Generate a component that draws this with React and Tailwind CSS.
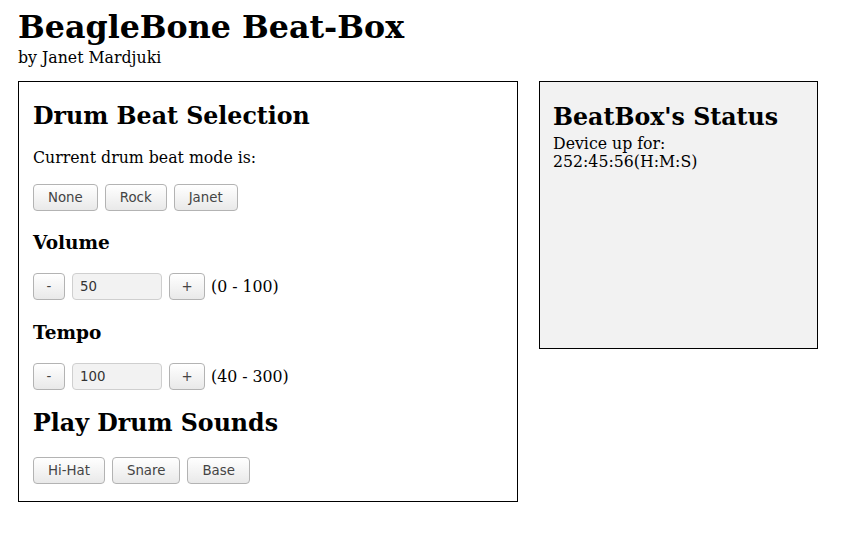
import React, { useState } from 'react';

const serif = "font-['DejaVu_Serif','Liberation_Serif',serif]";
const btn =
    "font-['DejaVu_Sans','Liberation_Sans',sans-serif] text-[13.33px] text-[#444] h-[27px] border border-[#b3b3b3] rounded-[4px] bg-gradient-to-b from-white to-[#e9e9e9] px-[14px] leading-none";
const smallBtn =
    "font-['DejaVu_Sans','Liberation_Sans',sans-serif] text-[13.33px] text-[#444] h-[27px] border border-[#b3b3b3] rounded-[4px] bg-gradient-to-b from-white to-[#e9e9e9] leading-none";

const Stepper = ({ value, range, onChange }) => (
    <div className="flex items-center h-[27px]">
        <button className={`${smallBtn} w-[32px]`} onClick={() => onChange(value - 1)}>-</button>
        <input
            type="text"
            value={value}
            onChange={(e) => onChange(e.target.value)}
            className="ml-[7px] w-[90px] h-[27px] border border-[#cfcfcf] rounded-[4px] bg-[#f2f2f2] px-[7px] font-['DejaVu_Sans','Liberation_Sans',sans-serif] text-[13.33px] text-[#333] outline-none"
        />
        <button className={`${smallBtn} w-[36px] ml-[7px]`} onClick={() => onChange(Number(value) + 1)}>+</button>
        <span className="ml-[6px] text-[15.75px]">{range}</span>
    </div>
);

const App = () => {
    const [volume, setVolume] = useState(50);
    const [tempo, setTempo] = useState(100);

    return (
        <div className={`${serif} text-black bg-white min-h-[551px] pl-[18px] pt-[8px]`}>
            <h1 className="text-[31.7px] font-bold leading-[38px]">BeagleBone Beat-Box</h1>
            <div className="text-[15.75px] leading-[19px] mt-[2px]">by Janet Mardjuki</div>

            <div className="flex items-start gap-[21px] mt-[14px]">
                <div className="w-[500px] h-[421px] border border-black px-[14px] pt-[20px]">
                    <h2 className="text-[23.7px] font-bold leading-[28px]">Drum Beat Selection</h2>
                    <p className="text-[15.75px] leading-[19px] mt-[18px]">Current drum beat mode is:</p>
                    <div className="flex gap-[7px] mt-[17px]">
                        <button className={btn}>None</button>
                        <button className={btn}>Rock</button>
                        <button className={btn}>Janet</button>
                    </div>

                    <h3 className="text-[18.5px] font-bold leading-[22px] mt-[21px]">Volume</h3>
                    <div className="mt-[19px]">
                        <Stepper value={volume} range="(0 - 100)" onChange={setVolume} />
                    </div>

                    <h3 className="text-[18.5px] font-bold leading-[22px] mt-[22px]">Tempo</h3>
                    <div className="mt-[19px]">
                        <Stepper value={tempo} range="(40 - 300)" onChange={setTempo} />
                    </div>

                    <h2 className="text-[23.7px] font-bold leading-[28px] mt-[19px]">Play Drum Sounds</h2>
                    <div className="flex gap-[7px] mt-[20px]">
                        <button className={btn}>Hi-Hat</button>
                        <button className={btn}>Snare</button>
                        <button className={btn}>Base</button>
                    </div>
                </div>

                <div className="w-[279px] h-[268px] border border-black bg-[#f2f2f2] px-[13px] pt-[21px]">
                    <h2 className="text-[23.7px] font-bold leading-[28px]">BeatBox's Status</h2>
                    <div className="text-[15.75px] leading-[18px] mt-[4px]">
                        Device up for:
                        <br />
                        252:45:56(H:M:S)
                    </div>
                </div>
            </div>
        </div>
    );
};

export default App;
